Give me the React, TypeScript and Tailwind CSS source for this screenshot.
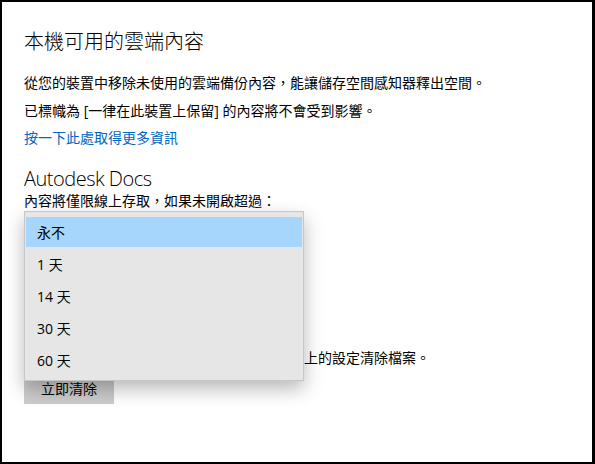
import React from 'react';

const options = ['永不', '1 天', '14 天', '30 天', '60 天'];

const DurationMenu: React.FC = () => {
  return (
    <div className="absolute left-0 top-[-1px] z-10 w-[280px] border border-[#c6c6c6] bg-[#e6e6e6] py-[4px] shadow-[0_8px_18px_rgba(0,0,0,0.28)]">
      {options.map((label, i) => (
        <div key={label} className="h-[32px] p-[1px]">
          <div
            className={`flex h-full items-center pl-[11px] text-[14px] text-black ${
              i === 0 ? 'bg-[#a6d6fb]' : ''
            }`}
          >
            {label}
          </div>
        </div>
      ))}
    </div>
  );
};

const App: React.FC = () => {
  return (
    <div
      lang="zh-TW"
      className="h-[464px] w-[595px] overflow-hidden border-y-2 border-l-2 border-r-[3px] border-black bg-white pl-[22px] pt-[26px] font-['Segoe_UI','Open_Sans','Noto_Sans_CJK_TC',sans-serif] text-black"
    >
      <h1 className="text-[20px] font-light leading-[28px]">本機可用的雲端內容</h1>

      <p className="mt-[13px] text-[14px] leading-[28px]">
        從您的裝置中移除未使用的雲端備份內容，能讓儲存空間感知器釋出空間。
      </p>
      <p className="text-[14px] leading-[28px]">
        已標幟為 [一律在此裝置上保留] 的內容將不會受到影響。
      </p>
      <a href="#more" className="block text-[14px] leading-[26px] text-[#0067c0]">
        按一下此處取得更多資訊
      </a>

      <h2 className="mt-[15px] text-[20px] font-light leading-[26px] tracking-[-0.5px]">Autodesk Docs</h2>
      <p className="text-[14px] leading-[18px]">內容將僅限線上存取，如果未開啟超過：</p>

      {/* combobox; its value sits under the open list */}
      <div className="relative mt-[2px] w-[280px]">
        <div aria-label="永不" className="h-[32px] border-2 border-[#999]" />
        <DurationMenu />
      </div>

      <p className="mt-[104px] text-[14px] leading-[20px]">
        若要立即釋放空間，儲存空間感知器依此頁面上的設定清除檔案。
      </p>
      <button className="mt-[4px] h-[32px] w-[90px] bg-[#cccccc] text-[14px] text-black">立即清除</button>
    </div>
  );
};

export default App;
